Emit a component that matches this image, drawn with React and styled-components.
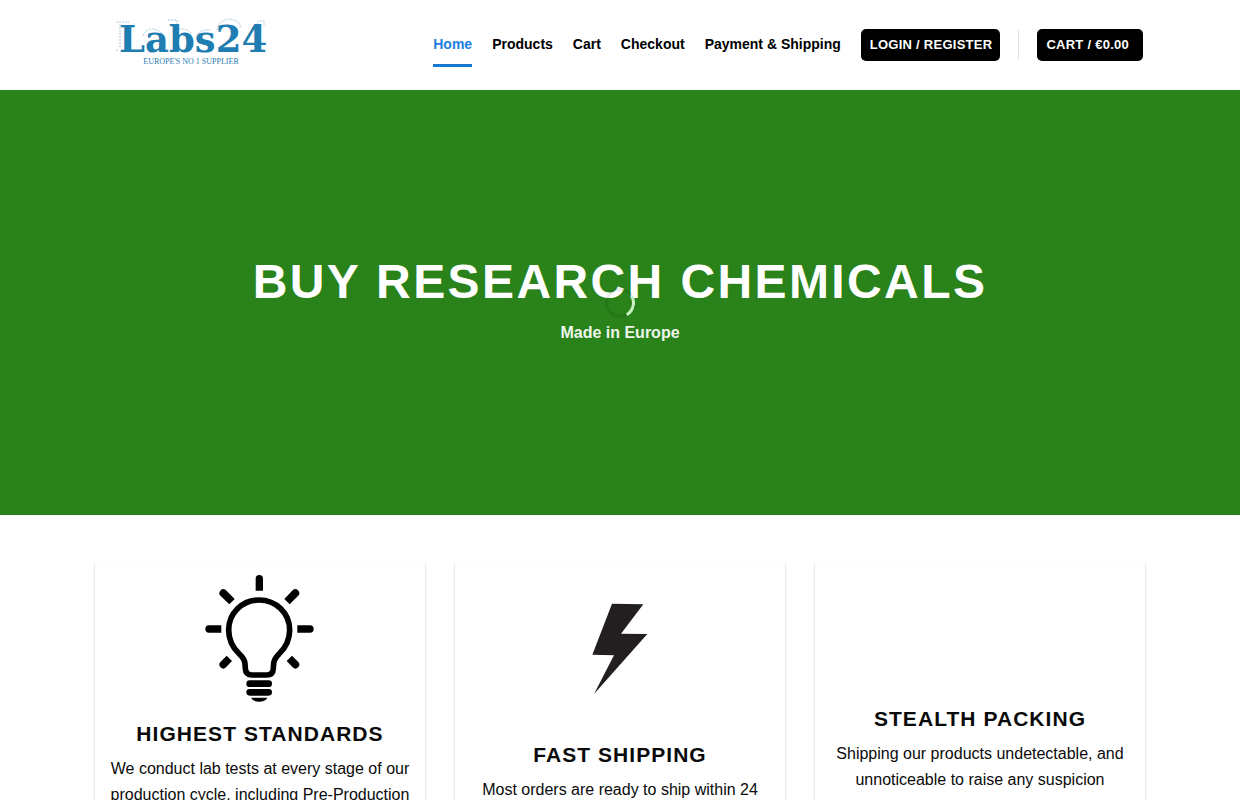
import React from "react";
import styled, { createGlobalStyle } from "styled-components";

const GlobalStyle = createGlobalStyle`
  *, *::before, *::after { box-sizing: border-box; }
  body {
    margin: 0;
    background: #fff;
    color: #0a0a0a;
    font-family: "Liberation Sans", Arial, sans-serif;
    font-size: 16px;
    line-height: 26px;
  }
`;

const Container = styled.div`
  max-width: 1080px;
  margin: 0 auto;
  padding: 0 15px;
`;

const HeaderInner = styled(Container)`
  display: flex;
  align-items: center;
  justify-content: space-between;
  height: 90px;
`;

const LogoLink = styled.a`
  display: block;
  margin-left: 20px;
  line-height: 0;
`;

const LogoSvg = styled.svg`
  overflow: visible;
`;

const HeaderRight = styled.div`
  display: flex;
  align-items: center;
  padding-right: 2px;
`;

const Nav = styled.nav`
  display: flex;
  gap: 20px;
  margin-right: 20px;
`;

const NavLink = styled.a`
  padding: 13px 0 12px;
  border-bottom: 3px solid ${(p) => (p.$active ? "#1478d0" : "transparent")};
  color: ${(p) => (p.$active ? "#1a80dc" : "#000")};
  font-size: 14px;
  line-height: 16px;
  font-weight: 700;
  text-decoration: none;
  white-space: nowrap;
`;

const HeaderButton = styled.a`
  height: 32px;
  padding: 0 ${(p) => (p.$wide ? 14 : 8)}px 0 9px;
  border-radius: 5px;
  background: #000;
  color: #fff;
  font-size: 13px;
  line-height: 32px;
  font-weight: 700;
  letter-spacing: 0.02em;
  text-decoration: none;
  text-transform: uppercase;
  white-space: nowrap;
`;

const Divider = styled.span`
  width: 1px;
  height: 30px;
  margin: 0 18px;
  background: #e2e2e2;
`;

const Hero = styled.section`
  position: relative;
  display: flex;
  flex-direction: column;
  align-items: center;
  justify-content: center;
  min-height: 425px;
  padding: 0 15px 9px;
  background: #29821a;
  color: #fff;
  text-align: center;
`;

const HeroTitle = styled.h1`
  margin: 0 0 7px;
  font-size: 48px;
  line-height: 62px;
  letter-spacing: 0.05em;
  text-transform: uppercase;
`;

const HeroText = styled.p`
  margin: 0;
  color: #eef6ec;
  font-weight: 700;
`;

const Spinner = styled.span`
  position: absolute;
  top: 50%;
  left: 50%;
  width: 30px;
  height: 30px;
  margin: -15px;
  border: 3px solid rgba(0, 0, 0, 0.08);
  border-right-color: #c9f0c2;
  border-radius: 50%;
  transform: rotate(15deg);
`;

const Features = styled(Container)`
  display: grid;
  grid-template-columns: repeat(3, 1fr);
  gap: 30px;
  padding-top: 47px;
  padding-bottom: 30px;
`;

const Card = styled.article`
  padding: 2px 15px 20px;
  box-shadow: 0 1px 3px -2px rgba(0, 0, 0, 0.12), 0 1px 2px rgba(0, 0, 0, 0.24);
  text-align: center;
`;

const CardMedia = styled.div`
  display: flex;
  align-items: center;
  justify-content: center;
  height: ${(p) => p.$height}px;
  padding-bottom: 10px;
`;

const CardTitle = styled.h3`
  margin: 0 0 9px;
  font-size: 21px;
  line-height: 27px;
  letter-spacing: 0.05em;
  text-transform: uppercase;
`;

const CardText = styled.p`
  margin: 0;
`;

function Logo() {
  return (
    <LogoSvg width="156" height="54" viewBox="0 0 156 54" role="img" aria-label="Labs24">
      <g fill="none" stroke="#a9cbdd" strokeWidth="1" strokeDasharray="2 1">
        <path d="M1 4H14M5 6V30M1 32H4" />
        <path d="M28 18Q30 11 38 11Q46 12 48 18" />
        <path d="M53 2H62V12Q70 9 76 15" />
        <path d="M82 17Q86 11 95 12" />
        <path d="M102 12Q104 2 114 1Q124 2 126 10" />
        <path d="M129 24L144 3H149V8" />
      </g>
      <text x="4" y="34" fill="#1f7db2" fontFamily='"DejaVu Serif", serif' fontWeight="700" fontSize="37">
        Labs24
      </text>
      <text x="76" y="46" textAnchor="middle" fill="#1f7db2" fontFamily='"Liberation Serif", serif' fontSize="8">
        EUROPE'S NO 1 SUPPLIER
      </text>
    </LogoSvg>
  );
}

function BulbIcon() {
  return (
    <svg width="140" height="145" viewBox="0 0 420 435" aria-hidden="true">
      <path
        d="M207 105C156 105 116 145 116 195C116 225 130 250 148 267C160 278 164 284 165 296L166 311Q167 330 186 330H230Q249 330 250 311L251 296C252 284 256 278 267 267C285 250 299 225 299 195C299 145 259 105 207 105Z"
        fill="none"
        stroke="#000"
        strokeWidth="17"
        strokeLinejoin="round"
      />
      <g fill="#000">
        <path d="M197 77V41A11 11 0 0 1 219 41V77Z" />
        <path d="M94 181H57A11 11 0 0 0 57 203H94Z" />
        <path d="M322 181H360A11 11 0 0 1 360 203H322Z" />
        <path d="M118 118L92 93A11 11 0 0 1 108 76L134 102Z" />
        <path d="M299 118L324 93A11 11 0 0 0 308 76L283 102Z" />
        <path d="M110 272L92 290A11 11 0 0 0 108 307L126 288Z" />
        <path d="M306 272L324 290A11 11 0 0 1 308 307L290 288Z" />
        <rect x="169" y="346" width="77" height="20" rx="10" />
        <rect x="169" y="372" width="77" height="20" rx="10" />
        <path d="M183 398H232Q226 410 207 410Q189 410 183 398Z" />
      </g>
    </svg>
  );
}

function BoltIcon() {
  return (
    <svg width="80" height="115" viewBox="0 0 240 345" aria-hidden="true">
      <path d="M96 41L190 43L123 131L202 132L42 312L102 196L37 194Z" fill="#231f20" />
    </svg>
  );
}

const NAV_ITEMS = ["Home", "Products", "Cart", "Checkout", "Payment & Shipping"];

const FEATURES = [
  {
    title: "Highest Standards",
    text: "We conduct lab tests at every stage of our production cycle, including Pre-Production",
    icon: <BulbIcon />,
    height: 156,
  },
  {
    title: "Fast Shipping",
    text: "Most orders are ready to ship within 24",
    icon: <BoltIcon />,
    height: 177,
  },
  {
    title: "Stealth Packing",
    text: "Shipping our products undetectable, and unnoticeable to raise any suspicion",
    icon: null,
    height: 141,
  },
];

export default function App() {
  return (
    <>
      <GlobalStyle />
      <header>
        <HeaderInner>
          <LogoLink href="#">
            <Logo />
          </LogoLink>
          <HeaderRight>
            <Nav>
              {NAV_ITEMS.map((item, i) => (
                <NavLink key={item} href="#" $active={i === 0}>
                  {item}
                </NavLink>
              ))}
            </Nav>
            <HeaderButton href="#">Login / Register</HeaderButton>
            <Divider />
            <HeaderButton href="#" $wide>
              Cart / €0.00
            </HeaderButton>
          </HeaderRight>
        </HeaderInner>
      </header>
      <main>
        <Hero>
          <HeroTitle>Buy Research Chemicals</HeroTitle>
          <HeroText>Made in Europe</HeroText>
          <Spinner />
        </Hero>
        <Features>
          {FEATURES.map((f) => (
            <Card key={f.title}>
              <CardMedia $height={f.height}>{f.icon}</CardMedia>
              <CardTitle>{f.title}</CardTitle>
              <CardText>{f.text}</CardText>
            </Card>
          ))}
        </Features>
      </main>
    </>
  );
}
